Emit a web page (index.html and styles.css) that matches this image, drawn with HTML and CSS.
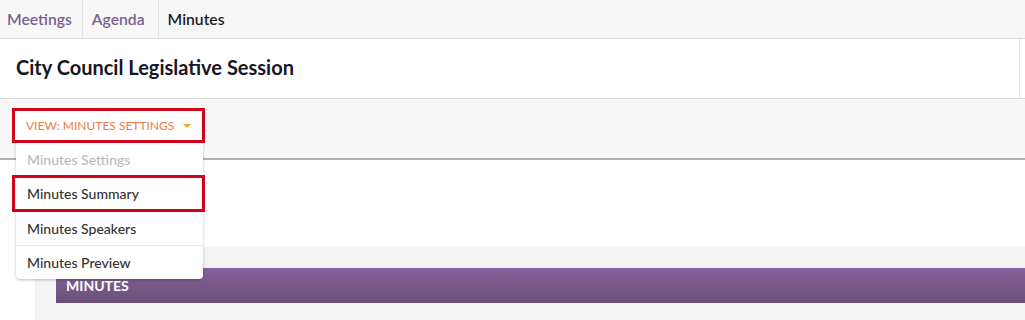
FILE: index.html
```html
<!DOCTYPE html>
<html>
<head>
<meta charset="utf-8">
<link rel="stylesheet" href="styles.css">
</head>
<body>
<nav class="tabs">
  <a class="tab tab-first">Meetings</a>
  <a class="tab">Agenda</a>
  <a class="tab tab-active">Minutes</a>
</nav>
<header class="header">
  <div class="header-main">
    <h1 class="title">City Council Legislative Session</h1>
  </div>
</header>
<div class="toolbar">
  <div class="dropdown">
    <button class="dropdown-toggle">
      <span>VIEW: MINUTES SETTINGS</span>
      <span class="caret"></span>
    </button>
    <ul class="menu">
      <li class="menu-item disabled">Minutes Settings</li>
      <li class="menu-item highlighted">Minutes Summary</li>
      <li class="menu-item">Minutes Speakers</li>
      <li class="menu-item sep">Minutes Preview</li>
    </ul>
  </div>
</div>
<main class="content">
  <section class="panel">
    <div class="panel-head">MINUTES</div>
  </section>
</main>
</body>
</html>
```
FILE: styles.css
```css
* { box-sizing: border-box; }
html, body { margin: 0; padding: 0; }
body {
  font-family: Lato, "Open Sans", sans-serif;
  background: #fff;
  color: #222;
  width: 1025px;
  height: 320px;
  overflow: hidden;
}
.tabs {
  display: flex;
  height: 39px;
  background: #f7f7f7;
  border-bottom: 1px solid #dcdcdc;
}
.tab {
  display: flex;
  align-items: center;
  padding: 0 13px 1px 9px;
  font-size: 15.7px;
  font-weight: 600;
  color: #7b5f91;
  border-right: 1px solid #e2e2e2;
}
.tab-first { padding-left: 7px; padding-right: 10px; }
.tab-active { color: #1c1c2a; border-right: none; }
.header {
  height: 60px;
  border-bottom: 1px solid #dcdcdc;
  background: #fff;
}
.header-main {
  width: 1020px;
  height: 59px;
  border-right: 1px solid #e2e2e2;
  display: flex;
  align-items: center;
  padding-left: 16px;
}
.title {
  margin: 0 0 4px 0;
  font-size: 20px;
  font-weight: 700;
  color: #161626;
}
.toolbar {
  height: 61px;
  background: #f7f7f7;
  border-bottom: 2px solid #b2b2b2;
  padding: 9px 0 0 12px;
}
.dropdown { position: relative; width: 193px; }
.dropdown-toggle {
  display: flex;
  align-items: center;
  justify-content: space-between;
  width: 193px;
  height: 35px;
  background: #fff;
  border: 3px solid #d0021b;
  padding: 0 11px 0 11px;
  font-family: Lato, sans-serif;
  font-size: 12px;
  color: #ea7b45;
  letter-spacing: 0;
}
.caret {
  width: 0;
  height: 0;
  border-left: 4px solid transparent;
  border-right: 4px solid transparent;
  border-top: 4px solid #f5a623;
  margin-top: 1px;
}
.menu {
  position: absolute;
  top: 35px;
  left: 4px;
  width: 187px;
  margin: 0;
  padding: 0;
  list-style: none;
  background: #fff;
  border-radius: 0 0 4px 4px;
  box-shadow: 0 1px 3px rgba(0,0,0,0.25);
  z-index: 5;
}
.menu-item {
  position: relative;
  height: 34px;
  display: flex;
  align-items: center;
  padding-left: 11px;
  font-size: 14px;
  font-weight: 500;
  color: #333;
}
.menu-item.disabled { color: #bbb; height: 33px; }
.menu-item.highlighted { height: 35px; }
.menu-item.highlighted::after {
  content: "";
  position: absolute;
  top: -1px;
  bottom: -1px;
  left: -4px;
  right: -2px;
  border: 3px solid #d0021b;
}
.menu-item.sep { border-top: 1px solid #e4e4e4; height: 34px; }
.content {
  padding: 87px 0 0 35px;
}
.panel {
  background: #f3f3f3;
  height: 80px;
  padding: 21px 0 0 21px;
}
.panel-head {
  height: 35px;
  background: linear-gradient(#86619b, #6a5078);
  border-radius: 3px 0 0 0;
  color: #fff;
  font-weight: 700;
  font-size: 14px;
  display: flex;
  align-items: center;
  padding-left: 10px;
}
```
